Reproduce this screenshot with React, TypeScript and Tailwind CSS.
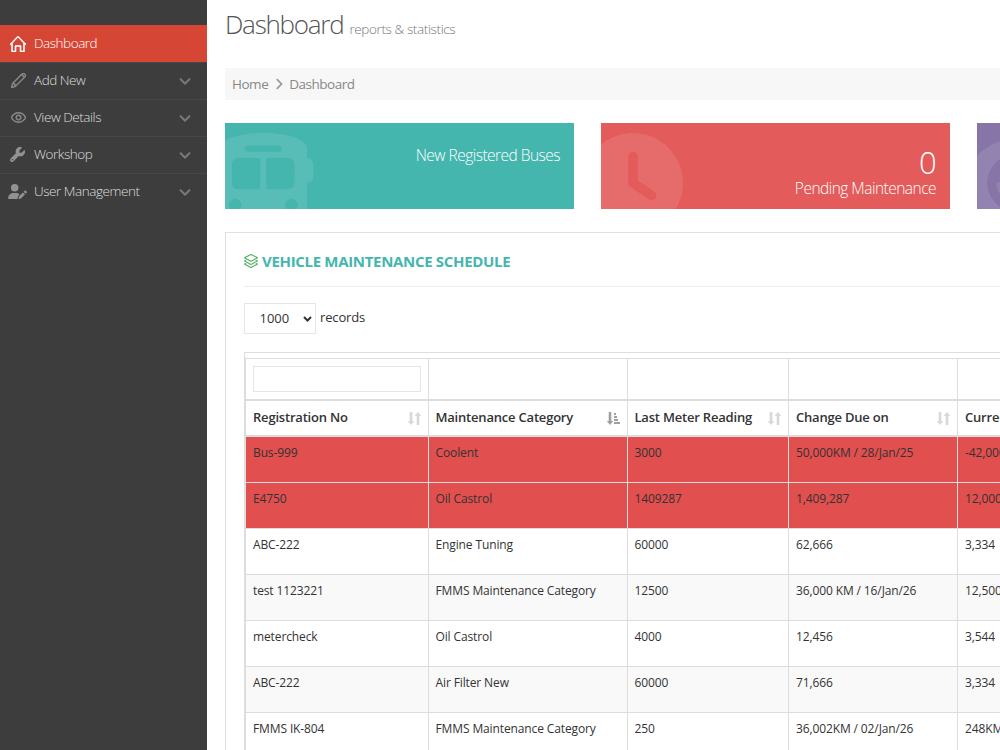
import { SlHome, SlPencil, SlEye, SlLayers } from "react-icons/sl";
import { FaWrench, FaUserPen, FaBus, FaClock, FaEye, FaAngleRight, FaAngleDown } from "react-icons/fa6";
import type { ReactNode } from "react";

const nav: { label: string; icon: ReactNode }[] = [
  { label: "Add New", icon: <SlPencil size={15} stroke="currentColor" strokeWidth={30} /> },
  { label: "View Details", icon: <SlEye size={15} stroke="currentColor" strokeWidth={30} /> },
  { label: "Workshop", icon: <FaWrench size={15} className="mr-[2px]" /> },
  { label: "User Management", icon: <FaUserPen className="mr-[2px] h-[15px] w-[19px] shrink-0" /> },
];

const columns = ["Registration No", "Maintenance Category", "Last Meter Reading", "Change Due on", "Current Meter"];

const rows: { cells: string[]; due?: boolean }[] = [
  { cells: ["Bus-999", "Coolent", "3000", "50,000KM / 28/Jan/25", "-42,000"], due: true },
  { cells: ["E4750", "Oil Castrol", "1409287", "1,409,287", "12,000"], due: true },
  { cells: ["ABC-222", "Engine Tuning", "60000", "62,666", "3,334"] },
  { cells: ["test 1123221", "FMMS Maintenance Category", "12500", "36,000 KM / 16/Jan/26", "12,500"] },
  { cells: ["metercheck", "Oil Castrol", "4000", "12,456", "3,544"] },
  { cells: ["ABC-222", "Air Filter New", "60000", "71,666", "3,334"] },
  { cells: ["FMMS IK-804", "FMMS Maintenance Category", "250", "36,002KM / 02/Jan/26", "248KM"] },
];

function SortIcon({ active }: { active: boolean }) {
  return (
    <svg width="13" height="13" viewBox="0 0 13 13" className={active ? "text-[#a0a0a0]" : "text-[#d8d8d8]"} fill="currentColor">
      <path d="M1.7 0h2.6v9h2L3 13 -.3 9h2z" />
      {active ? <path d="M7 1h2v2H7zM7 4h3v2H7zM7 7h4v2H7zM7 10h6v2H7z" /> : <path d="M8.7 13h2.6V4h2L10 0 6.7 4h2z" />}
    </svg>
  );
}

function Sidebar() {
  return (
    <aside className="w-[207px] shrink-0 bg-[#3d3d3d] pt-[25px] text-[13.5px] font-light tracking-[-0.46px]">
      <div className="flex h-[37px] items-center bg-[#d64635] pl-[10px] text-white">
        <SlHome size={16} strokeWidth={40} stroke="currentColor" />
        <span className="ml-2">Dashboard</span>
      </div>
      {nav.map((n) => (
        <div key={n.label} className="flex h-[37px] items-center border-t border-[#474747] pr-[15px] pb-[1px] pl-[8px] text-[#dedede]">
          <span className="flex w-[20px] justify-center text-[#929292]">{n.icon}</span>
          <span className="ml-[6px] grow">{n.label}</span>
          <FaAngleDown size={14} className="text-[#7c7c7c]" stroke="currentColor" strokeWidth={16} />
        </div>
      ))}
    </aside>
  );
}

export default function App() {
  return (
    <div className="flex h-[750px] w-[1000px] overflow-hidden bg-white font-['Open_Sans',sans-serif] text-[#333]">
      <Sidebar />
      <main className="min-w-0 grow overflow-hidden pl-[18px]">
        <h1 className="flex h-[68px] items-baseline gap-[6px] pt-[6px] text-[26px] leading-[36px] font-light tracking-[-1.25px] text-[#555]">
          Dashboard <small className="text-[13.5px] tracking-[-0.38px] text-[#777]">reports &amp; statistics</small>
        </h1>
        <nav className="flex h-[32px] items-center bg-[#f7f7f7] pl-[7px] text-[13.5px] tracking-[-0.48px] text-[#888]">
          Home <FaAngleRight size={14} className="mr-[3px] ml-[4px] text-[#999]" /> Dashboard
        </nav>
        <section className="mt-[23px] flex w-[1110px] gap-[27px] font-light text-white">
          <div className="flex h-[86px] w-[349px] overflow-hidden bg-[#44b6ae]">
            <FaBus className="mt-[10px] ml-[-18px] h-[100px] w-[112.5px] shrink-0 opacity-10" />
            <div className="grow pt-[20px] pr-[14px] text-right text-[15.5px] leading-6 tracking-[-0.52px]">New Registered Buses</div>
          </div>
          <div className="flex h-[86px] w-[349px] overflow-hidden bg-[#e35b5a]">
            <FaClock className="mt-[10px] ml-[-18px] size-[100px] shrink-0 opacity-10" />
            <div className="grow pt-[24px] pr-[14px] text-right">
              <div className="text-[31px] leading-[30px] tracking-[-0.8px]">0</div>
              <div className="text-[15.5px] leading-[22px] tracking-[-0.52px] whitespace-nowrap">Pending Maintenance</div>
            </div>
          </div>
          <div className="flex h-[86px] w-[349px] overflow-hidden bg-[#8775a7]">
            <FaEye className="mt-[10px] ml-[-18px] h-[100px] w-[112.5px] shrink-0 opacity-10" />
          </div>
        </section>
        <section className="mt-[23px] h-[560px] w-[1110px] border border-[#e1e1e1] pt-[12px] pl-[18px]">
          <div className="flex h-[42px] items-center gap-[4px] border-b border-[#eee] pb-[8px]">
            <SlLayers size={14} className="mb-[1px] text-[#4cae60]" stroke="currentColor" strokeWidth={12} />
            <h2 className="text-[15px] font-bold tracking-[-0.32px] text-[#44b6ae]">VEHICLE MAINTENANCE SCHEDULE</h2>
          </div>
          <div className="mt-[16px] flex items-center text-[13px]">
            <div className="flex h-[31px] w-[72px] items-center border border-[#e5e5e5] pl-[14.5px]">
              <span className="w-[43px]">1000</span>
              <svg width="9" height="6" viewBox="0 0 9 6" fill="none" stroke="#333" strokeWidth="2"><path d="M1 1l3.5 3.5L8 1" /></svg>
            </div>
            <span className="mb-[2px] ml-[4px] tracking-[-0.15px]">records</span>
          </div>
          <div className="mt-[18px] border-t border-l border-[#ddd] pt-[5px]">
            <table className="w-[1090px] table-fixed border-separate border-spacing-0 border-t border-l border-[#ddd] text-left">
              <colgroup>
                <col className="w-[182.5px]" /><col className="w-[199px]" /><col className="w-[161.5px]" /><col className="w-[169px]" /><col />
              </colgroup>
              <thead>
                <tr className="h-[42px]">
                  {columns.map((c, i) => (
                    <th key={c} className="border-r border-b-2 border-[#ddd] px-[7px] py-0">
                      {i === 0 && <input aria-label={c} className="block h-[26px] w-full border border-[#e5e5e5]" />}
                    </th>
                  ))}
                </tr>
                <tr className="h-[36px]">
                  {columns.map((c, i) => (
                    <th key={c} className="border-r border-b-2 border-[#ddd] px-[7px] py-0 text-[13px] font-semibold tracking-[-0.2px] whitespace-nowrap">
                      <div className="flex items-center justify-between">{c}<SortIcon active={i === 1} /></div>
                    </th>
                  ))}
                </tr>
              </thead>
              <tbody>
                {rows.map((r, i) => (
                  <tr key={i} className={r.due ? "h-[46px] bg-[#e14f4f]" : i % 2 ? "h-[46px] bg-[#f9f9f9]" : "h-[46px]"}>
                    {r.cells.map((c, j) => (
                      <td key={j} className="border-r border-b border-[#ddd] px-[7px] pt-[7px] pb-0 align-top text-[12px] leading-[18px] tracking-[-0.12px] whitespace-nowrap">{c}</td>
                    ))}
                  </tr>
                ))}
              </tbody>
            </table>
          </div>
        </section>
      </main>
    </div>
  );
}
